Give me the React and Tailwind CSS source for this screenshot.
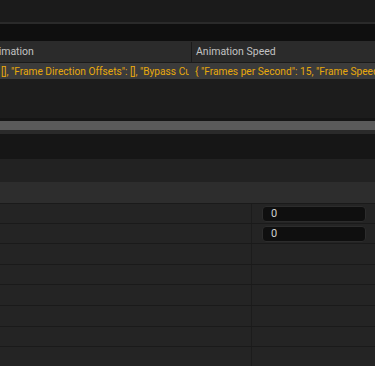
const rows = [
  { h: 'h-[22px]', value: '0' },
  { h: 'h-[22px]', value: '0' },
  { h: 'h-[23px]' },
  { h: 'h-[22px]' },
  { h: 'h-[22px]' },
  { h: 'h-[23px]' },
  { h: 'h-[22px]' },
  { h: 'h-[22px]' },
]

const PropertyRow = ({ h, value }) => (
  <div className={`${h} flex border-t border-[#1a1a1a] bg-[#242424]`}>
    <div className="w-[252px] shrink-0 border-r border-[#1c1c1c]" />
    <div className="flex-1 flex items-center pl-[10px]">
      {value !== undefined && (
        <div className="w-[104px] h-[16px] mt-px rounded-[4px] bg-[#0f0f0f] border border-[#2c2c2c] flex items-center pl-[8px] pt-px text-[11px] text-[#cfcfcf]">
          {value}
        </div>
      )}
    </div>
  </div>
)

export default function App() {
  return (
    <div className="w-[375px] h-[366px] overflow-hidden bg-[#1c1c1c] font-['Roboto','Liberation_Sans',sans-serif] flex flex-col">
      <div className="h-[22px] shrink-0 bg-[#1b1b1b]" />
      <div className="h-[2px] shrink-0 bg-[#2a2a2a]" />
      <div className="h-[17px] shrink-0 bg-[#0f0f0f]" />

      {/* table header */}
      <div className="h-[21px] shrink-0 flex bg-[#2b2b2b] text-[10.5px] text-[#c2c2c2] pt-px">
        <div className="w-[192px] shrink-0 border-r border-[#1a1a1a] overflow-hidden flex items-center whitespace-nowrap">
          <span className="ml-[-14px]">Animation</span>
        </div>
        <div className="flex-1 flex items-center pl-[4px] whitespace-nowrap">Animation Speed</div>
      </div>
      <div className="h-px shrink-0 bg-[#1a1a1a]" />

      {/* selected row */}
      <div className="h-[16px] shrink-0 flex bg-[#3b3b3b] text-[10.2px] text-[#e8a90c] whitespace-nowrap pt-px">
        <div className="w-[189px] shrink-0 overflow-hidden flex items-center pl-[1px]">
          [], "Frame Direction Offsets": [], "Bypass Custom Rotation": false
        </div>
        <div className="w-[4px] shrink-0" />
        <div className="flex-1 overflow-hidden flex items-center pl-[2px]">
          {'{ "Frames per Second": 15, "Frame Speed Multiplier": 1 }'}
        </div>
      </div>

      <div className="h-[39px] shrink-0 bg-[#1c1c1c]" />
      <div className="h-[3px] shrink-0 bg-[#151515]" />
      <div className="h-[9px] shrink-0 bg-[#5a5a5a]" />
      <div className="h-[4px] shrink-0 bg-[#2a2a2a]" />
      <div className="h-[25px] shrink-0 bg-[#161616]" />
      <div className="h-[23px] shrink-0 bg-[#222222]" />
      <div className="h-[21px] shrink-0 bg-[#2d2d2d]" />

      {rows.map((r, i) => (
        <PropertyRow key={i} {...r} />
      ))}
    </div>
  )
}
